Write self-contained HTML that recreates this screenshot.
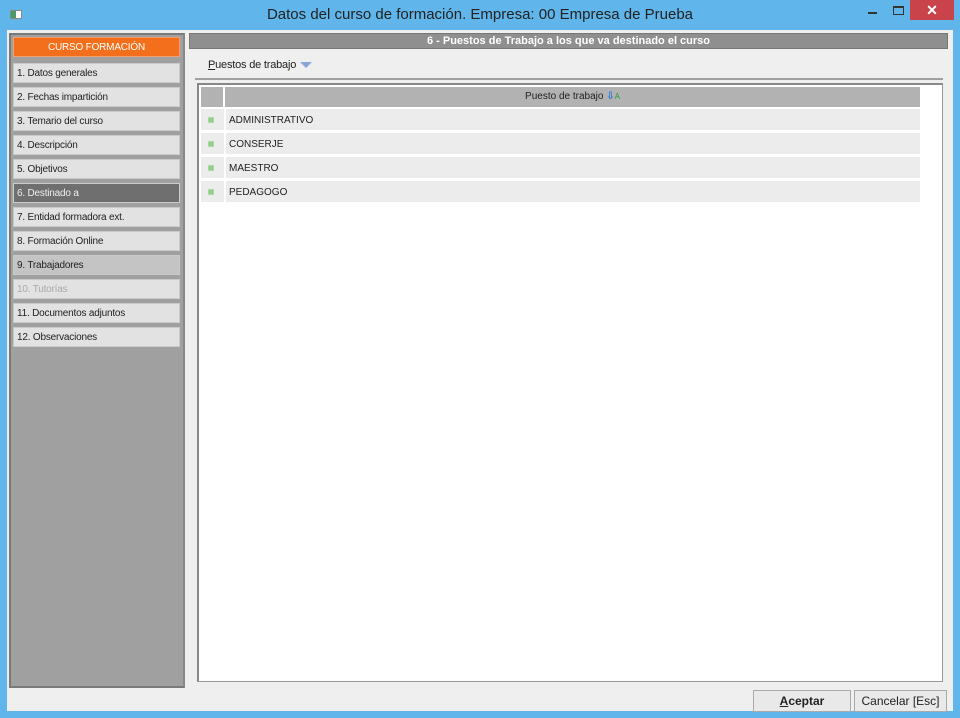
<!DOCTYPE html>
<html><head><meta charset="utf-8"><style>
*{margin:0;padding:0;box-sizing:border-box}
body{width:960px;height:718px;background:#60b5ea;font-family:"Liberation Sans",sans-serif;font-size:11px;position:relative;overflow:hidden}
.abs{position:absolute}
.title{left:0;top:0;width:960px;height:30px;text-align:center;font-size:15px;line-height:30px;color:#222}
.client{left:7px;top:30px;width:946px;height:681px;background:#efefef}
.left{left:9px;top:33px;width:176px;height:655px;background:#a0a0a0;border:2px solid #7a7a7a;border-right-color:#888}
.item{position:absolute;left:2px;width:167px;height:20px;background:#e2e2e2;border:1px solid #c9c9c9;line-height:20px;padding-left:3px;font-size:10px;color:#222;letter-spacing:-0.2px}
.hdr{left:189px;top:33px;width:759px;height:16px;background:#8f8f8f;border:1px solid #777;color:#fff;font-weight:bold;text-align:center;font-size:11px;line-height:14px}
.grid{left:197px;top:83px;width:746px;height:599px;background:#fff;border:1px solid #999;border-left:2px solid #888;border-top:2px solid #888}
.row{position:absolute;left:2px;width:719px;height:21px;background:#ececec}
.row .c{position:absolute;left:23px;top:0;bottom:0;width:2px;background:#fff}
.row .dot{position:absolute;left:7px;top:8px;width:6px;height:6px;background:#8bcf8b;border:1px solid #aad8aa}
.row span{position:absolute;left:28px;top:6px;font-size:10px;color:#222}
.btn{top:690px;height:22px;background:#e9e9e9;border:1px solid #aaa;text-align:center;line-height:20px;font-size:12px;color:#222}
</style></head><body>
<div class="abs title">Datos del curso de formación. Empresa: 00 Empresa de Prueba</div>
<div class="abs" style="left:10px;top:10px;width:12px;height:9px;background:#fff;border:1px solid #888"><div style="width:5px;height:7px;background:#4a9b6a"></div></div>
<div class="abs" style="left:868px;top:12px;width:9px;height:2px;background:#333"></div>
<div class="abs" style="left:893px;top:6px;width:11px;height:9px;border:1px solid #333;border-top-width:2px"></div>
<div class="abs" style="left:910px;top:0;width:44px;height:20px;background:#c8444a;color:#fff;text-align:center;line-height:20px;font-size:14px;font-weight:bold">✕</div>
<div class="abs client"></div>
<div class="abs left">
<div class="item" style="top:2px;background:#f36f1b;border-color:#f0a070;color:#fff;text-align:center;padding:0">CURSO FORMACIÓN</div>
<div class="item" style="top:28px">1. Datos generales</div>
<div class="item" style="top:52px">2. Fechas impartición</div>
<div class="item" style="top:76px">3. Temario del curso</div>
<div class="item" style="top:100px">4. Descripción</div>
<div class="item" style="top:124px">5. Objetivos</div>
<div class="item" style="top:148px;background:#6f6f6f;border-color:#ccc;color:#eee">6. Destinado a</div>
<div class="item" style="top:172px">7. Entidad formadora ext.</div>
<div class="item" style="top:196px">8. Formación Online</div>
<div class="item" style="top:220px;background:#c4c4c4">9. Trabajadores</div>
<div class="item" style="top:244px;color:#aaa">10. Tutorías</div>
<div class="item" style="top:268px">11. Documentos adjuntos</div>
<div class="item" style="top:292px">12. Observaciones</div>
</div>
<div class="abs hdr">6 - Puestos de Trabajo a los que va destinado el curso</div>
<div class="abs" style="left:208px;top:59px;font-size:11px;color:#222;letter-spacing:-0.2px"><u>P</u>uestos de trabajo</div>
<div class="abs" style="left:300px;top:62px;width:0;height:0;border-left:6px solid transparent;border-right:6px solid transparent;border-top:6px solid #8aa6d8"></div>
<div class="abs" style="left:195px;top:78px;width:748px;height:2px;background:#a0a0a0"></div>
<div class="abs grid">
<div class="abs" style="left:2px;top:2px;width:22px;height:20px;background:#b2b2b2"></div>
<div class="abs" style="left:26px;top:2px;width:695px;height:20px;background:#b2b2b2;text-align:center;line-height:20px;font-size:10px;color:#222">Puesto de trabajo <span style="color:#3a7fd8;font-weight:bold">⇩</span><span style="color:#2a9a3a;font-size:8px">A</span></div>
<div class="row" style="top:24px"><div class="dot"></div><div class="c"></div><span>ADMINISTRATIVO</span></div>
<div class="row" style="top:48px"><div class="dot"></div><div class="c"></div><span>CONSERJE</span></div>
<div class="row" style="top:72px"><div class="dot"></div><div class="c"></div><span>MAESTRO</span></div>
<div class="row" style="top:96px"><div class="dot"></div><div class="c"></div><span>PEDAGOGO</span></div>
</div>
<div class="abs btn" style="left:753px;width:98px;font-weight:bold"><u>A</u>ceptar</div>
<div class="abs btn" style="left:854px;width:93px">Cancelar [Esc]</div>
</body></html>
